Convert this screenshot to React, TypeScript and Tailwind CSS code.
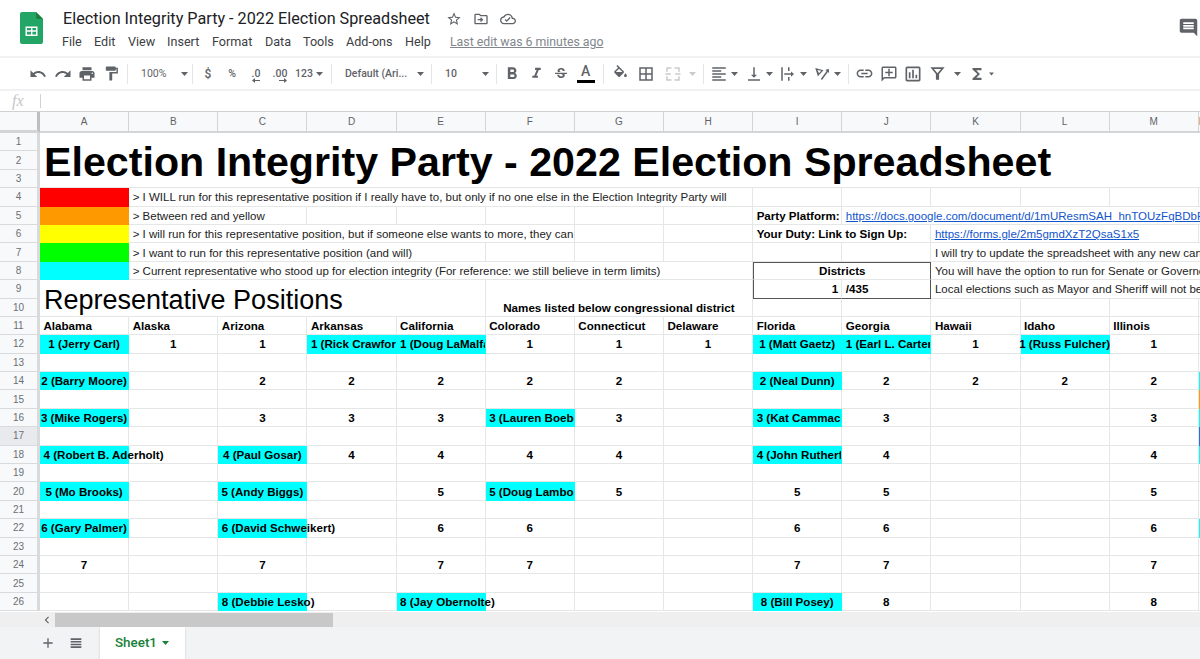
import React from "react";

type Cell = {
  t?: string;
  bg?: string;
  k?: "l" | "c" | "r" | "title" | "sub" | "link" | "plain";
  b?: boolean;
  clip?: boolean;
  cs?: string;
  rs?: string;
  over?: boolean;
  box?: string;
  end?: boolean;
};

const COLS = ["A", "B", "C", "D", "E", "F", "G", "H", "I", "J", "K", "L", "M", "N"];
const CY = "bg-[#00ffff]";

const cells: Record<string, Cell> = {
  A1: { t: "Election Integrity Party - 2022 Election Spreadsheet", k: "title", cs: "col-span-14", rs: "row-span-3" },
  A4: { bg: "bg-[#ff0000]" },
  B4: { t: "> I WILL run for this representative position if I really have to, but only if no one else in the Election Integrity Party will", k: "plain", cs: "col-span-7" },
  A5: { bg: "bg-[#ff9900]" },
  B5: { t: "> Between red and yellow", k: "plain", cs: "col-span-2" },
  I5: { t: "Party Platform:", b: true, k: "l" },
  J5: { t: "https://docs.google.com/document/d/1mUResmSAH_hnTOUzFqBDbPk2", k: "link", cs: "col-span-5", clip: true },
  A6: { bg: "bg-[#ffff00]" },
  B6: { t: "> I will run for this representative position, but if someone else wants to more, they can", k: "plain", cs: "col-span-5" },
  I6: { t: "Your Duty: Link to Sign Up:", b: true, k: "l", cs: "col-span-2" },
  K6: { t: "https://forms.gle/2m5gmdXzT2QsaS1x5", k: "link", cs: "col-span-3" },
  A7: { bg: "bg-[#00ff00]" },
  B7: { t: "> I want to run for this representative position (and will)", k: "plain", cs: "col-span-4" },
  K7: { t: "I will try to update the spreadsheet with any new candidates", k: "plain", cs: "col-span-4", clip: true },
  A8: { bg: CY },
  B8: { t: "> Current representative who stood up for election integrity (For reference: we still believe in term limits)", k: "plain", cs: "col-span-7" },
  I8: { t: "Districts", b: true, k: "c", cs: "col-span-2", box: "border-t border-l border-r border-b border-t-[#555555] border-l-[#555555] border-r-[#555555] border-b-[#e5e6e6]" },
  K8: { t: "You will have the option to run for Senate or Governor as well", k: "plain", cs: "col-span-4", clip: true },
  A9: { t: "Representative Positions", k: "sub", cs: "col-span-5", rs: "row-span-2" },
  F9: { t: "Names listed below congressional district", b: true, k: "c", cs: "col-span-3", rs: "row-span-2", end: true },
  I9: { t: "1", b: true, k: "r", box: "border-l border-b border-r border-l-[#555555] border-b-[#555555] border-r-[#e5e6e6]" },
  J9: { t: "/435", b: true, k: "l", box: "border-r border-b border-[#555555]" },
  K9: { t: "Local elections such as Mayor and Sheriff will not be included", k: "plain", cs: "col-span-4", clip: true },
};

const add = (row: number, entries: Record<string, string | number>) => {
  for (const [col, v] of Object.entries(entries)) {
    cells[col + row] = { t: String(v), b: true, k: "c" };
  }
};
const hi = (key: string, t: string, k: "l" | "c" = "c", clip = false, over = false) => {
  cells[key] = { t, b: true, k, bg: CY, clip, over };
};

["Alabama", "Alaska", "Arizona", "Arkansas", "California", "Colorado", "Connecticut", "Delaware", "Florida", "Georgia", "Hawaii", "Idaho", "Illinois"].forEach((s, i) => {
  cells[COLS[i] + 11] = { t: s, b: true, k: "l" };
});

add(12, { B: 1, C: 1, F: 1, G: 1, H: 1, K: 1, M: 1 });
hi("A12", "1 (Jerry Carl)");
hi("D12", "1 (Rick Crawford)", "l", true);
hi("E12", "1 (Doug LaMalfa)", "l", true);
hi("I12", "1 (Matt Gaetz)");
hi("J12", "1 (Earl L. Carter)", "l", true);
hi("L12", "1 (Russ Fulcher)");
add(14, { C: 2, D: 2, E: 2, F: 2, G: 2, J: 2, K: 2, L: 2, M: 2 });
hi("A14", "2 (Barry Moore)");
hi("I14", "2 (Neal Dunn)");
cells.N14 = { bg: CY };
cells.N15 = { bg: "bg-[#ff9900]" };
add(16, { C: 3, D: 3, E: 3, G: 3, J: 3, M: 3 });
hi("A16", "3 (Mike Rogers)");
hi("F16", "3 (Lauren Boebert)", "l", true);
hi("I16", "3 (Kat Cammack)", "l", true);
cells.N16 = { bg: CY };
cells.N17 = { bg: "bg-[#1a73e8]" };
add(18, { D: 4, E: 4, F: 4, G: 4, J: 4, M: 4 });
hi("A18", "4 (Robert B. Aderholt)", "l", false, true);
hi("C18", "4 (Paul Gosar)");
hi("I18", "4 (John Rutherford)", "l", true);
cells.N18 = { bg: CY };
add(20, { E: 5, G: 5, I: 5, J: 5, M: 5 });
hi("A20", "5 (Mo Brooks)");
hi("C20", "5 (Andy Biggs)");
hi("F20", "5 (Doug Lamborn)", "l", true);
add(22, { E: 6, F: 6, I: 6, J: 6, M: 6 });
hi("A22", "6 (Gary Palmer)");
hi("C22", "6 (David Schweikert)", "l", false, true);
cells.N22 = { bg: CY };
add(24, { A: 7, C: 7, E: 7, F: 7, I: 7, J: 7, M: 7 });
add(26, { J: 8, M: 8 });
hi("C26", "8 (Debbie Lesko)", "l", false, true);
hi("E26", "8 (Jay Obernolte)", "l", false, true);
hi("I26", "8 (Bill Posey)");

const covered = new Set<string>();
Object.entries(cells).forEach(([key, c]) => {
  const col = COLS.indexOf(key[0]);
  const row = Number(key.slice(1));
  const spanC = c.cs ? Number(c.cs.split("-")[2]) : 1;
  const spanR = c.rs ? Number(c.rs.split("-")[2]) : 1;
  for (let i = 0; i < spanC; i++)
    for (let j = 0; j < spanR; j++)
      if (i || j) covered.add(COLS[col + i] + (row + j));
});

const I = ({ d, s = 18, c = "#5f6368" }: { d: string; s?: number; c?: string }) => (
  <svg width={s} height={s} viewBox="0 0 24 24" fill={c} fillRule="evenodd" className="shrink-0">
    <path d={d} />
  </svg>
);

const Caret = ({ c = "#5f6368", w = 7 }: { c?: string; w?: number }) => (
  <svg width={w} height={4} viewBox="0 0 7 4" className="shrink-0">
    <path d="M0 0h7L3.5 4z" fill={c} />
  </svg>
);

const Sep = () => <div className="w-px h-[20px] bg-[#e4e5e7] shrink-0" />;

const Btn = ({ d, s = 18, c, w = "w-[24.5px]" }: { d: string; s?: number; c?: string; w?: string }) => (
  <div className={`${w} flex justify-center items-center shrink-0`}>
    <I d={d} s={s} c={c} />
  </div>
);

const Arrow = ({ left }: { left?: boolean }) => (
  <svg width="8" height="5" viewBox="0 0 8 5" className={`absolute top-[12px] ${left ? "left-[8px]" : "left-[11px]"}`}>
    <path d={left ? "M0 2.5L3 0v2h5v1H3v2z" : "M8 2.5L5 0v2H0v1h5v2z"} fill="#5f6368" />
  </svg>
);

const P = {
  undo: "M12.5 8c-2.65 0-5.05.99-6.9 2.6L2 7v9h9l-3.62-3.62c1.39-1.16 3.16-1.88 5.12-1.88 3.54 0 6.55 2.31 7.6 5.5l2.37-.78C21.08 11.03 17.15 8 12.5 8z",
  redo: "M18.4 10.6C16.55 8.99 14.15 8 11.5 8c-4.65 0-8.58 3.03-9.96 7.22L3.9 16c1.05-3.19 4.05-5.5 7.6-5.5 1.95 0 3.73.72 5.12 1.88L13 16h9V7l-3.6 3.6z",
  print: "M19 8H5c-1.66 0-3 1.34-3 3v6h4v4h12v-4h4v-6c0-1.66-1.34-3-3-3zm-3 11H8v-5h8v5zm3-7c-.55 0-1-.45-1-1s.45-1 1-1 1 .45 1 1-.45 1-1 1zm-1-9H6v4h12V3z",
  paint: "M18 4V3c0-.55-.45-1-1-1H5c-.55 0-1 .45-1 1v4c0 .55.45 1 1 1h12c.55 0 1-.45 1-1V6h1v4H9v11c0 .55.45 1 1 1h2c.55 0 1-.45 1-1v-9h8V4h-3z",
  bold: "M15.6 10.79c.97-.67 1.65-1.77 1.65-2.79 0-2.26-1.75-4-4-4H7v14h7.04c2.09 0 3.71-1.7 3.71-3.79 0-1.52-.86-2.82-2.15-3.42zM10 6.5h3c.83 0 1.5.67 1.5 1.5s-.67 1.5-1.5 1.5h-3v-3zm3.5 9H10v-3h3.5c.83 0 1.5.67 1.5 1.5s-.67 1.5-1.5 1.5z",
  italic: "M10 4v3h2.21l-3.42 8H6v3h8v-3h-2.21l3.42-8H18V4z",
  strike: "M7.24 8.75c-.26-.48-.39-1.03-.39-1.67 0-.61.13-1.16.4-1.67.26-.5.63-.93 1.11-1.29.48-.35 1.05-.63 1.7-.83.66-.19 1.39-.29 2.18-.29.81 0 1.54.11 2.21.34.66.22 1.23.54 1.69.94.47.4.83.88 1.08 1.43.25.55.38 1.15.38 1.81h-3.01c0-.31-.05-.59-.15-.85-.09-.27-.24-.49-.44-.68-.2-.19-.45-.33-.75-.44-.3-.1-.66-.16-1.06-.16-.39 0-.74.04-1.03.13-.29.09-.53.21-.72.36-.19.16-.34.34-.44.55-.1.21-.15.43-.15.66 0 .48.25.88.74 1.21.38.25.77.48 1.41.7H7.39c-.05-.08-.11-.17-.15-.25zM21 12v-2H3v2h9.62c.18.07.4.14.55.2.37.17.66.34.87.51.21.17.35.36.43.57.07.2.11.43.11.69 0 .23-.05.45-.14.66-.09.2-.23.38-.42.53-.19.15-.42.26-.71.35-.29.08-.63.13-1.01.13-.43 0-.83-.04-1.18-.13s-.66-.23-.91-.42c-.25-.19-.45-.44-.59-.75-.14-.31-.25-.76-.25-1.21H6.4c0 .55.08 1.13.24 1.58.16.45.37.85.65 1.21.28.35.6.66.98.92.37.26.78.48 1.22.65.44.17.9.3 1.38.39.48.08.96.13 1.44.13.8 0 1.53-.09 2.18-.28s1.21-.45 1.67-.79c.46-.34.82-.77 1.07-1.27s.38-1.07.38-1.71c0-.6-.1-1.14-.31-1.61-.05-.11-.11-.23-.17-.33H21z",
  fill: "M16.56 8.94L7.62 0 6.21 1.41l2.38 2.38-5.15 5.15c-.59.59-.59 1.54 0 2.12l5.5 5.5c.29.29.68.44 1.06.44s.77-.15 1.06-.44l5.5-5.5c.59-.58.59-1.53 0-2.12zM5.21 10L10 5.21 14.79 10H5.21zM19 11.5s-2 2.17-2 3.5c0 1.1.9 2 2 2s2-.9 2-2c0-1.33-2-3.5-2-3.5z",
  border: "M3 3v18h18V3H3zm8 16H5v-6h6v6zm0-8H5V5h6v6zm8 8h-6v-6h6v6zm0-8h-6V5h6v6z",
  merge: "M3 3h7v2H5v4H3zM14 3h7v6h-2V5h-5zM3 15h2v4h5v2H3zM19 15h2v6h-7v-2h5zM2 11h7v2H2zM15 11h7v2h-7z",
  alignL: "M15 15H3v2h12v-2zm0-8H3v2h12V7zM3 13h18v-2H3v2zm0 8h18v-2H3v2zM3 3v2h18V3H3z",
  alignV: "M16 13h-3V3h-2v10H8l4 4 4-4zM4 19v2h16v-2H4z",
  wrap: "M3 3h2v18H3zM12 3h2v5h-2zM12 16h2v5h-2zM7 11h9V8.5l4 3.5-4 3.5V13H7z",
  rotate: "M3 4l11 3-7.5 8zM6 6.8l2 4.2 3-3.2zM21 5l.5 5.5-1.7-1.3L12 20l-1.6-1.2L18.2 8l-1.7-1.3z",
  link: "M3.9 12c0-1.71 1.39-3.1 3.1-3.1h4V7H7c-2.76 0-5 2.24-5 5s2.24 5 5 5h4v-1.9H7c-1.71 0-3.1-1.39-3.1-3.1zM8 13h8v-2H8v2zm9-6h-4v1.9h4c1.71 0 3.1 1.39 3.1 3.1s-1.39 3.1-3.1 3.1h-4V17h4c2.76 0 5-2.24 5-5s-2.24-5-5-5z",
  comment: "M20 2H4c-1.1 0-2 .9-2 2v18l4-4h14c1.1 0 2-.9 2-2V4c0-1.1-.9-2-2-2zm0 14H5.2L4 17.2V4h16v12zM11 5h2v4h4v2h-4v4h-2v-4H7V9h4z",
  chart: "M9 17H7v-7h2v7zm4 0h-2V7h2v10zm4 0h-2v-4h2v4zm2 2H5V5h14v14zm0-16H5c-1.1 0-2 .9-2 2v14c0 1.1.9 2 2 2h14c1.1 0 2-.9 2-2V5c0-1.1-.9-2-2-2z",
  filter: "M3 4h18l-7 8.5V20h-4v-7.5zM7.5 6.2l4.5 5.4 4.5-5.4z",
  sigma: "M18 4H6v2l6.5 6L6 18v2h12v-3h-7l5-5-5-5h7z",
  star: "M22 9.24l-7.19-.62L12 2 9.19 8.63 2 9.24l5.46 4.73L5.82 21 12 17.27 18.18 21l-1.63-7.03L22 9.24zM12 15.4l-3.76 2.27 1-4.28-3.32-2.88 4.38-.38L12 6.1l1.71 4.04 4.38.38-3.32 2.88 1 4.28L12 15.4z",
  move: "M20 6h-8l-2-2H4c-1.1 0-2 .9-2 2v12c0 1.1.9 2 2 2h16c1.1 0 2-.9 2-2V8c0-1.1-.9-2-2-2zm0 12H4V6h5.17l2 2H20v10zM12 9.5l-1.4 1.4 1.1 1.1H7v2h4.7l-1.1 1.1L12 16.5l3.5-3.5z",
  cloud: "M19.35 10.04C18.67 6.59 15.64 4 12 4 9.11 4 6.6 5.64 5.35 8.04 2.34 8.36 0 10.91 0 14c0 3.31 2.69 6 6 6h13c2.76 0 5-2.24 5-5 0-2.64-2.05-4.78-4.65-4.96zM19 18H6c-2.21 0-4-1.79-4-4 0-2.05 1.53-3.76 3.56-3.97l1.07-.11.5-.95C8.08 7.14 9.94 6 12 6c2.62 0 4.88 1.86 5.39 4.43l.3 1.5 1.53.11c1.56.1 2.78 1.41 2.78 2.96 0 1.65-1.35 3-3 3zm-9-1.5l-3-3 1.4-1.4 1.6 1.6 4.6-4.6 1.4 1.4z",
  bubble: "M21.99 4c0-1.1-.89-2-1.99-2H4c-1.1 0-2 .9-2 2v12c0 1.1.9 2 2 2h14l4 4-.01-18zM18 14H6v-2h12v2zm0-3H6V9h12v2zm0-3H6V6h12v2z",
  plus: "M19 13h-6v6h-2v-6H5v-2h6V5h2v6h6v2z",
  list: "M4 5h16v2.4H4zM4 9h16v2.4H4zM4 13h16v2.4H4zM4 17h16v2.4H4z",
  left: "M15.4 7.4L14 6l-6 6 6 6 1.4-1.4L10.8 12z",
};

const menu: [string, string][] = [
  ["File", "w-[32px]"],
  ["Edit", "w-[34px]"],
  ["View", "w-[39px]"],
  ["Insert", "w-[45px]"],
  ["Format", "w-[53px]"],
  ["Data", "w-[38px]"],
  ["Tools", "w-[43px]"],
  ["Add-ons", "w-[59px]"],
  ["Help", "w-[45px]"],
];

function renderCell(c: Cell | undefined) {
  if (!c?.t) return null;
  if (c.k === "title")
    return <span className="pl-[4px] pt-[5px] text-[41.2px] font-bold leading-none text-black whitespace-nowrap">{c.t}</span>;
  if (c.k === "sub")
    return <span className="pl-[4px] pt-[4px] text-[27px] leading-none text-black whitespace-nowrap">{c.t}</span>;
  const tone = c.k === "link" ? "text-[#1155cc] underline text-[11.53px] pt-[2px]" : c.b ? "text-black font-bold text-[11.6px]" : "text-[#222222] text-[11.53px] pt-[2px]";
  return <span className={`whitespace-nowrap leading-[13px] ${tone}`}>{c.t}</span>;
}

function GridCell({ id }: { id: string }) {
  const c = cells[id];
  const align =
    c?.k === "c"
      ? "justify-center"
      : c?.k === "r"
        ? "justify-end pr-[3px]"
        : c?.k === "title" || c?.k === "sub"
          ? "justify-start"
          : "justify-start pl-[3.5px]";
  const lines = c?.box ? c.box : c?.bg ? "border-r border-b border-transparent" : "border-r border-b border-[#e5e6e6]";
  return (
    <div
      className={`flex min-w-0 ${c?.end ? "items-end pb-[2px]" : "items-center"} ${align} ${c?.cs ?? ""} ${c?.rs ?? ""} ${c?.bg ?? ""} ${lines} ${
        c?.clip ? "overflow-hidden" : "overflow-visible"
      } ${c?.over ? "relative z-10" : ""}`}
    >
      {renderCell(c)}
    </div>
  );
}

export default function App() {
  const rows = Array.from({ length: 26 }, (_, i) => i + 1);
  return (
    <div className="w-[1200px] h-[659px] overflow-hidden flex flex-col bg-white font-['Roboto',sans-serif] text-[#3c4043]">
      {/* Title and menus */}
      <header className="h-[56px] flex shrink-0 relative">
        <div className="w-[63px] shrink-0 pl-[20px] pt-[12px]">
          <svg width="23" height="32" viewBox="0 0 23 32">
            <path d="M2 0h14l7 7v23a2 2 0 0 1-2 2H2a2 2 0 0 1-2-2V2a2 2 0 0 1 2-2z" fill="#23a566" />
            <path d="M16 0l7 7h-5a2 2 0 0 1-2-2z" fill="#188038" />
            <path d="M5.5 14.5h12v9.5h-12zM7 16v2.3h4V16zm5.4 0v2.3H16V16zM7 19.8v2.7h4v-2.7zm5.4 0v2.7H16v-2.7z" fill="#fff" fillRule="evenodd" />
          </svg>
        </div>
        <div className="flex flex-col min-w-0">
          <div className="flex items-center h-[27px] pt-[11px]">
            <span className="text-[16.2px] leading-none text-[#202124] w-[383px] whitespace-nowrap">Election Integrity Party - 2022 Election Spreadsheet</span>
            <div className="w-[27px]"><I d={P.star} s={16} /></div>
            <div className="w-[27px]"><I d={P.move} s={16} /></div>
            <I d={P.cloud} s={16} />
          </div>
          <nav className="flex items-center h-[20px] mt-[5px] text-[12.6px] -ml-[1px]">
            {menu.map(([m, w]) => (
              <span key={m} className={`${w} shrink-0`}>{m}</span>
            ))}
            <span className="text-[12.3px] text-[#80868b] underline whitespace-nowrap">Last edit was 6 minutes ago</span>
          </nav>
        </div>
        <div className="ml-auto pt-[17px] pr-[1px]">
          <I d={P.bubble} s={21} />
        </div>
      </header>

      {/* Toolbar */}
      <div className="h-[35px] shrink-0 flex items-center border-t-2 border-b-2 border-[#f0f1f2] pl-[26px] text-[10.5px] text-[#5f6368]">
        <Btn d={P.undo} />
        <Btn d={P.redo} />
        <Btn d={P.print} />
        <Btn d={P.paint} s={17} />
        <div className="w-[3px]" />
        <Sep />
        <div className="w-[64px] flex items-center pl-[13px] shrink-0">
          <span className="w-[40px]">100%</span>
          <Caret />
        </div>
        <Sep />
        <div className="w-[138px] flex items-center shrink-0 font-medium">
          <span className="w-[24px] text-center ml-[3px] text-[12px]">$</span>
          <span className="w-[24px] text-center">%</span>
          <span className="w-[24px] text-center relative">.0<Arrow left /></span>
          <span className="w-[24px] text-center relative">.00<Arrow /></span>
          <span className="w-[24px] text-center">123</span>
          <Caret />
        </div>
        <Sep />
        <div className="w-[99px] flex items-center pl-[13px] shrink-0 font-medium">
          <span className="w-[72px] whitespace-nowrap">Default (Ari...</span>
          <Caret />
        </div>
        <Sep />
        <div className="w-[64px] flex items-center pl-[13px] shrink-0 font-medium">
          <span className="w-[37px]">10</span>
          <Caret />
        </div>
        <Sep />
        <div className="w-[3px]" />
        <Btn d={P.bold} s={20} />
        <Btn d={P.italic} s={17} />
        <Btn d={P.strike} s={16} />
        <div className="w-[24.5px] flex flex-col items-center shrink-0 relative">
          <span className="text-[14px] leading-none font-medium">A</span>
          <div className="w-[18px] h-[3px] bg-black mt-[2px]" />
        </div>
        <div className="w-[5px]" />
        <Sep />
        <div className="w-[4px]" />
        <Btn d={P.fill} s={17} />
        <Btn d={P.border} w="w-[27px]" />
        <Btn d={P.merge} c="#c8cacc" w="w-[27px]" />
        <div className="w-[2px]" /><Caret c="#c8cacc" />
        <div className="w-[7px]" />
        <Sep />
        <div className="w-[6.5px]" />
        <Btn d={P.alignL} w="w-[18px]" />
        <div className="w-[2.5px]" /><Caret />
        <div className="w-[7px]" />
        <Btn d={P.alignV} w="w-[18px]" />
        <div className="w-[3px]" /><Caret />
        <div className="w-[6px]" />
        <Btn d={P.wrap} w="w-[18px]" />
        <div className="w-[3px]" /><Caret />
        <div className="w-[6px]" />
        <Btn d={P.rotate} w="w-[18px]" />
        <div className="w-[3px]" /><Caret />
        <div className="w-[7px]" />
        <Sep />
        <div className="w-[3.5px]" />
        <Btn d={P.link} s={19} />
        <Btn d={P.comment} />
        <Btn d={P.chart} s={20} />
        <Btn d={P.filter} s={19} />
        <div className="w-[3.5px]" /><Caret />
        <div className="w-[6px]" />
        <Btn d={P.sigma} w="w-[20px]" />
        <div className="w-[2.5px]" /><Caret w={5} />
      </div>

      {/* Formula bar */}
      <div className="h-[20px] shrink-0 flex items-center">
        <span className="w-[40px] pl-[12px] font-['Liberation_Serif',serif] italic text-[16px] text-[#c4c6c9]">fx</span>
        <div className="w-px h-[14px] bg-[#cfd1d3]" />
      </div>

      {/* Sheet */}
      <div className="h-[501px] shrink-0 overflow-hidden grid grid-cols-[40px_repeat(13,89.15px)_1fr] grid-rows-[21px_repeat(26,18.4px)] font-['Liberation_Sans',sans-serif] text-[11.6px] border-t border-[#cfd1d3]">
        <div className="bg-[#f8f9fa] border-r-[3px] border-b-[3px] border-r-[#bdbfc1] border-b-[#d4d5d6]" />
        {COLS.map((c) => (
          <div key={c} className="bg-[#f8f9fa] border-r border-b-2 border-r-[#d4d5d6] border-b-[#d4d5d6] flex items-center justify-center text-[10px] text-[#5f6368]">
            {c}
          </div>
        ))}
        {rows.map((r) => (
          <React.Fragment key={r}>
            <div className={`border-r-[3px] border-b border-r-[#d9dadb] border-b-[#d9dadb] flex items-center justify-center text-[10px] text-[#6b6f73] ${r === 17 ? "bg-[#e8eaed]" : "bg-[#f8f9fa]"}`}>
              {r}
            </div>
            {COLS.map((c) => (covered.has(c + r) ? null : <GridCell key={c + r} id={c + r} />))}
          </React.Fragment>
        ))}
      </div>

      {/* Scroll bar */}
      <div className="h-[15px] shrink-0 bg-[#efefef] flex items-center">
        <div className="w-[55px] flex justify-end pr-[1px] shrink-0">
          <I d={P.left} s={14} />
        </div>
        <div className="w-[278px] h-[14px] bg-[#c8c8c8]" />
      </div>

      {/* Sheet tabs */}
      <div className="flex-1 bg-[#f1f3f4] flex items-stretch">
        <div className="w-[56px] flex justify-end items-center shrink-0"><I d={P.plus} s={16} /></div>
        <div className="w-[40px] flex justify-center items-center shrink-0"><I d={P.list} s={16} /></div>
        <div className="w-[85px] ml-[4px] bg-white flex items-center pl-[15px] gap-[5px] text-[13.4px] font-medium text-[#188038] shadow-[0_1px_2px_#c4c6c9]">
          <span>Sheet1</span>
          <Caret c="#188038" />
        </div>
      </div>
    </div>
  );
}
